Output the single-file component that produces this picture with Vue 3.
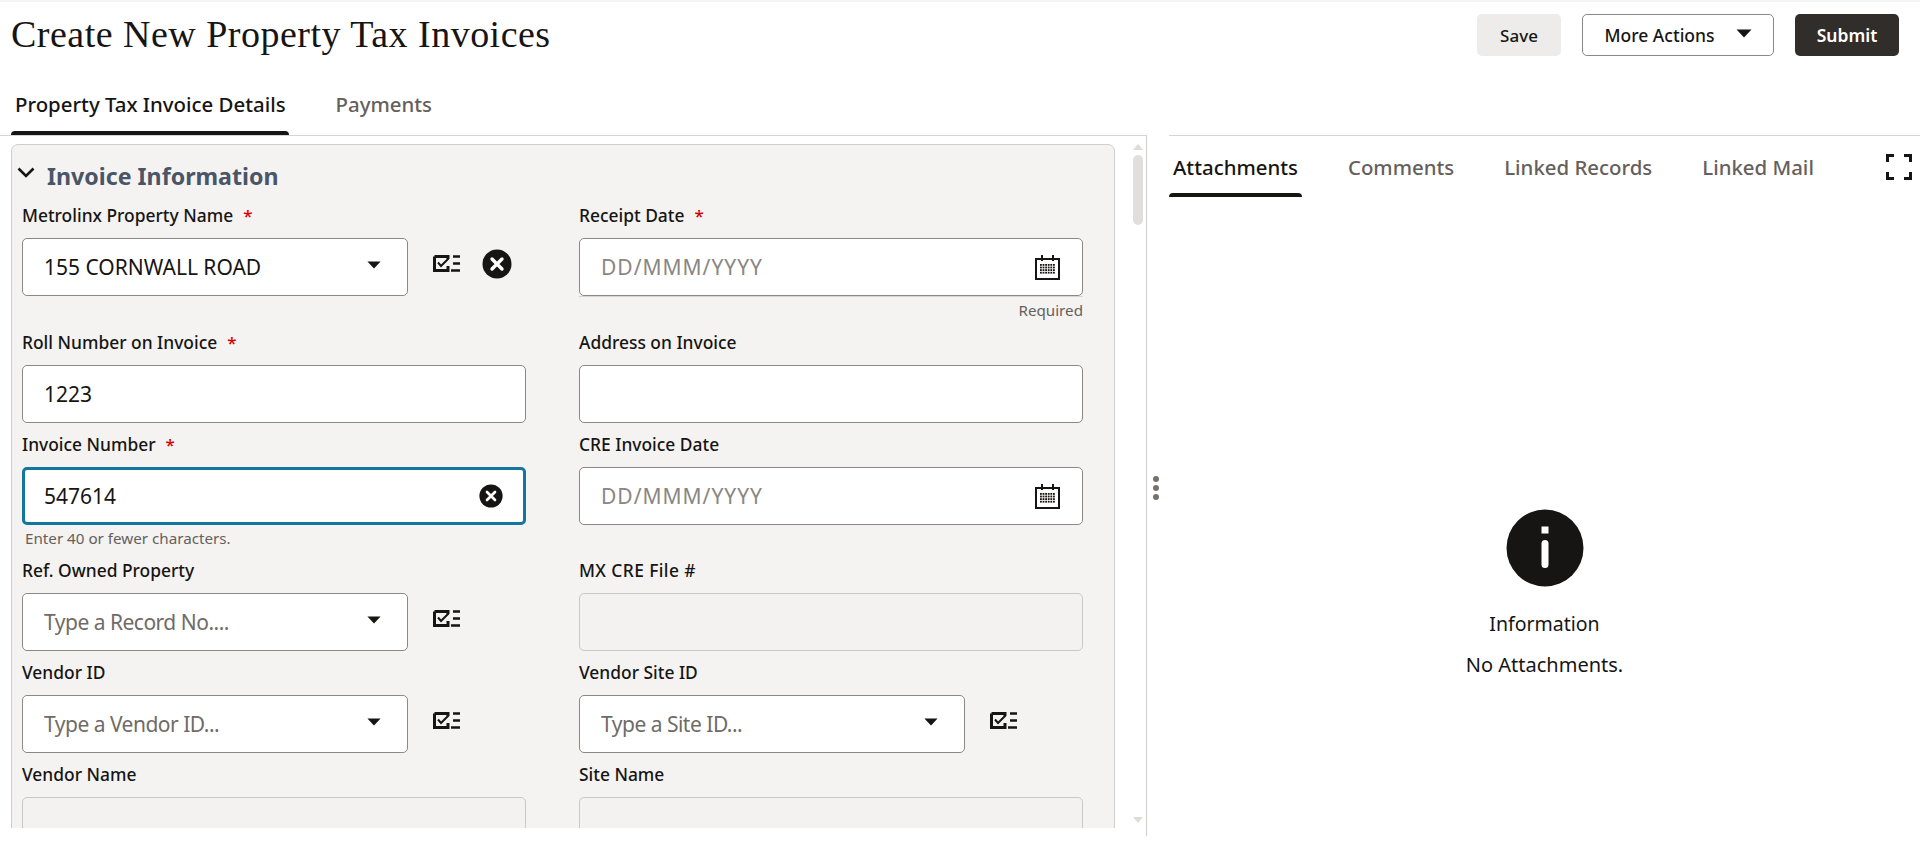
<script setup>
const rightTabs = ['Comments', 'Linked Records', 'Linked Mail']
const calendarDots = []
for (let r = 0; r < 4; r++) for (let c = 0; c < 6; c++) calendarDots.push({ x: 5 + c * 2.6, y: 9 + r * 2.6 })
</script>

<template>
  <div class="page">
    <svg class="defs" width="0" height="0" aria-hidden="true">
      <symbol id="checklist" viewBox="0 0 27 17">
        <path d="M1.5 1.5H15V4M15 11V15.5H1.5V1.5" fill="none" stroke="#161513" stroke-width="3"/>
        <path d="M5 7.5 L8 11 L15.5 3.5" fill="none" stroke="#161513" stroke-width="2"/>
        <path d="M20 1.5H27M20 8.5H27M18 15.5H27" fill="none" stroke="#161513" stroke-width="2.6"/>
      </symbol>
      <symbol id="clear" viewBox="0 0 30 30">
        <circle cx="15" cy="15" r="14.5" fill="#161513"/>
        <path d="M10 10 L20 20 M20 10 L10 20" stroke="#fff" stroke-width="3.4" stroke-linecap="round"/>
      </symbol>
      <symbol id="calendar" viewBox="0 0 25 25">
        <path d="M1 4H24V24H1Z" fill="none" stroke="#161513" stroke-width="2"/>
        <path d="M7 0V6M18 0V6" stroke="#161513" stroke-width="2"/>
        <rect v-for="(d, i) in calendarDots" :key="i" :x="d.x" :y="d.y" width="1.8" height="1.8" fill="#161513"/>
      </symbol>
      <symbol id="caret" viewBox="0 0 16 9">
        <path d="M0.5 0.5H15.5L8 8.5Z" fill="#161513"/>
      </symbol>
    </svg>

    <div class="strip"></div>

    <header class="header">
      <h1 class="title">Create New Property Tax Invoices</h1>
      <div class="actions">
        <button class="btn btn-save">Save</button>
        <button class="btn btn-more">More Actions<svg class="more-caret"><use href="#caret"/></svg></button>
        <button class="btn btn-submit">Submit</button>
      </div>
    </header>

    <nav class="main-tabs">
      <span class="tab active">Property Tax Invoice Details</span>
      <span class="tab">Payments</span>
    </nav>

    <div class="body">
      <section class="left">
        <div class="panel-wrap">
          <div class="panel">
            <div class="section-head">
              <svg class="chevron" viewBox="0 0 18 11"><path d="M1.5 1.5 L9 9 L16.5 1.5" fill="none" stroke="#161513" stroke-width="2.6"/></svg>
              <h2>Invoice Information</h2>
            </div>
            <div class="form">
              <div class="field">
                <label>Metrolinx Property Name<i>*</i></label>
                <div class="line">
                  <div class="ctl select"><span class="val">155 CORNWALL ROAD</span><svg class="caret"><use href="#caret"/></svg></div>
                  <svg class="ico-list"><use href="#checklist"/></svg>
                  <svg class="ico-clear"><use href="#clear"/></svg>
                </div>
              </div>
              <div class="field">
                <label>Receipt Date<i>*</i></label>
                <div class="ctl"><span class="ph date">DD/MMM/YYYY</span><svg class="cal"><use href="#calendar"/></svg></div>
                <div class="help right">Required</div>
              </div>

              <div class="field">
                <label>Roll Number on Invoice<i>*</i></label>
                <div class="ctl"><span class="val">1223</span></div>
              </div>
              <div class="field">
                <label>Address on Invoice</label>
                <div class="ctl"></div>
              </div>

              <div class="field">
                <label>Invoice Number<i>*</i></label>
                <div class="ctl focus"><span class="val">547614</span><svg class="ico-clear-in"><use href="#clear"/></svg></div>
                <div class="help">Enter 40 or fewer characters.</div>
              </div>
              <div class="field">
                <label>CRE Invoice Date</label>
                <div class="ctl"><span class="ph date">DD/MMM/YYYY</span><svg class="cal"><use href="#calendar"/></svg></div>
              </div>

              <div class="field">
                <label>Ref. Owned Property</label>
                <div class="line">
                  <div class="ctl select"><span class="ph">Type a Record No....</span><svg class="caret"><use href="#caret"/></svg></div>
                  <svg class="ico-list"><use href="#checklist"/></svg>
                </div>
              </div>
              <div class="field">
                <label class="wide">MX CRE File #</label>
                <div class="ctl off"></div>
              </div>

              <div class="field">
                <label>Vendor ID</label>
                <div class="line">
                  <div class="ctl select"><span class="ph">Type a Vendor ID...</span><svg class="caret"><use href="#caret"/></svg></div>
                  <svg class="ico-list"><use href="#checklist"/></svg>
                </div>
              </div>
              <div class="field">
                <label>Vendor Site ID</label>
                <div class="line">
                  <div class="ctl select"><span class="ph">Type a Site ID...</span><svg class="caret"><use href="#caret"/></svg></div>
                  <svg class="ico-list"><use href="#checklist"/></svg>
                </div>
              </div>

              <div class="field">
                <label>Vendor Name</label>
                <div class="ctl off"></div>
              </div>
              <div class="field">
                <label>Site Name</label>
                <div class="ctl off"></div>
              </div>
            </div>
          </div>
        </div>
        <div class="scrollbar">
          <span class="arrow up"></span>
          <span class="thumb"></span>
          <span class="arrow down"></span>
        </div>
      </section>

      <div class="splitter"><span></span><span></span><span></span></div>

      <section class="right">
        <nav class="side-tabs">
          <span class="stab active">Attachments</span>
          <span v-for="t in rightTabs" :key="t" class="stab">{{ t }}</span>
          <svg class="expand" viewBox="0 0 26 26">
            <path d="M1.5 8V1.5H8M18 1.5H24.5V8M24.5 18V24.5H18M8 24.5H1.5V18" fill="none" stroke="#161513" stroke-width="3"/>
          </svg>
        </nav>
        <div class="empty">
          <svg class="info" viewBox="0 0 78 78">
            <circle cx="39" cy="39" r="38.5" fill="#161513"/>
            <rect x="35.5" y="17.5" width="7" height="7" fill="#fff"/>
            <rect x="35.5" y="31" width="7" height="28" rx="3.5" fill="#fff"/>
          </svg>
          <p class="info-title">Information</p>
          <p class="info-text">No Attachments.</p>
        </div>
      </section>
    </div>
  </div>
</template>

<style>
html, body { margin: 0; background: #fff; overflow: hidden; }
</style>

<style scoped>
.page {
  height: 843px;
  width: 1920px;
  overflow: hidden;
  background: #fff;
  color: #161513;
  font-family: "Noto Sans", "Open Sans", sans-serif;
  display: flex;
  flex-direction: column;
}
.defs { position: absolute; }
.strip { height: 2px; background: #f5f5f5; flex: none; }
.header {
  flex: none;
  height: 70px;
  display: flex;
  justify-content: space-between;
  padding: 12px 21px 0 11px;
  box-sizing: border-box;
}
.title {
  margin: -1px 0 0;
  font-family: "Liberation Serif", "DejaVu Serif", serif;
  font-weight: 400;
  font-size: 38px;
  letter-spacing: 0.48px;
  line-height: 42px;
  color: #161513;
}
.actions { display: flex; gap: 21px; height: 42px; }
.btn {
  font-family: inherit;
  font-size: 17.5px;
  font-weight: 500;
  height: 42px;
  padding: 0;
  border-radius: 5px;
  border: 1px solid transparent;
  color: #161513;
  display: flex;
  align-items: center;
  justify-content: center;
  box-sizing: border-box;
}
.btn-save { width: 84px; background: #edecea; font-size: 17px; }
.btn-more { width: 192px; background: #fff; border-color: #8b8986; gap: 21px; }
.more-caret { width: 16px; height: 9px; margin-top: -3px; }
.btn-submit { width: 104px; background: #312d2a; color: #fff; font-weight: 600; }

.main-tabs {
  flex: none;
  height: 63px;
  box-sizing: border-box;
  display: flex;
  gap: 43px;
  padding-left: 11px;
  align-items: flex-end;
}
.tab {
  height: 63px;
  box-sizing: border-box;
  padding: 18px 3px 0 4px;
  font-size: 20.4px;
  font-weight: 500;
  color: #65605c;
  line-height: 28px;
  position: relative;
}
.tab.active { color: #161513; }
.tab.active::after,
.stab.active::after {
  content: "";
  position: absolute;
  left: 0;
  right: 0;
  bottom: 0;
  height: 4px;
  background: #161513;
  border-radius: 4px 4px 0 0;
}

.body { flex: none; height: 701px; display: flex; }
.left {
  width: 1147px;
  flex: none;
  display: flex;
  border-top: 1px solid #d6d5d3;
  border-right: 1px solid #cfcecc;
  box-sizing: border-box;
}
.panel-wrap {
  width: 1115px;
  flex: none;
  height: 692px;
  padding: 8px 0 0 11px;
  box-sizing: border-box;
  overflow: hidden;
}
.panel {
  width: 1104px;
  height: 760px;
  box-sizing: border-box;
  background: #f4f3f1;
  border: 1px solid #cfcecc;
  border-radius: 7px 7px 0 0;
  padding: 0 10px;
}
.section-head { display: flex; align-items: center; height: 60px; gap: 12px; padding: 0 0 0 2px; margin-left: -8px; }
.chevron { width: 18px; height: 11px; margin-top: -6px; margin-left: 1px; flex: none; }
.section-head h2 { margin: 1px 0 0; font-size: 23.2px; font-weight: 700; color: #4a5567; line-height: 30px; }
.form {
  display: grid;
  grid-template-columns: 504px 504px;
  column-gap: 53px;
  row-gap: 11px;
  align-items: start;
}
.field label {
  display: block;
  height: 33px;
  font-size: 17.4px;
  line-height: 20px;
  font-weight: 500;
  color: #161513;
}
.field label.wide { letter-spacing: 0.4px; }
.field label i { font-style: normal; color: #d40000; margin-left: 10px; font-size: 17px; }
.line { display: flex; align-items: flex-start; }
.ctl {
  height: 58px;
  box-sizing: border-box;
  border: 1px solid #8b8986;
  border-radius: 5px;
  background: #fff;
  display: flex;
  align-items: center;
  padding: 0 21px;
  font-size: 21px;
}
.ctl.select { width: 386px; flex: none; }
.ctl.off { background: #f3f2f0; border-color: #c9c8c6; }
.ctl.focus { border: 3px solid #14759e; padding: 0 20px 0 19px; }
.val { color: #161513; }
.ph { color: #6f6b67; letter-spacing: -0.5px; }
.ph.date { color: #8a8683; letter-spacing: 1px; }
.caret { width: 14px; height: 8px; margin-left: auto; margin-right: 5px; margin-top: -4px; }
.cal { width: 25px; height: 25px; margin-left: auto; margin-right: 1px; }
.ico-list { width: 27px; height: 17px; margin: 17px 0 0 25px; flex: none; }
.ico-clear { width: 30px; height: 30px; margin: 11px 0 0 22px; flex: none; }
.ico-clear-in { width: 24px; height: 24px; margin-left: auto; }
.help { height: 24px; font-size: 15.2px; line-height: 27px; color: #65605c; padding-left: 3px; }
.help.right { text-align: right; }

.scrollbar {
  flex: 1;
  height: 692px;
  display: flex;
  flex-direction: column;
  align-items: center;
  padding-top: 8px;
  box-sizing: border-box;
}
.thumb { width: 10px; height: 70px; margin-top: 5px; margin-left: 14px; border-radius: 5px; background: #e0dfdd; }
.arrow { width: 0; height: 0; margin-left: 14px; border-left: 5px solid transparent; border-right: 5px solid transparent; }
.arrow.up { border-bottom: 6px solid #dddcda; }
.arrow.down { border-top: 6px solid #dddcda; margin-top: auto; margin-bottom: 5px; }

.splitter {
  width: 22px;
  flex: none;
  height: 701px;
  display: flex;
  flex-direction: column;
  align-items: center;
  justify-content: center;
  gap: 3px;
  padding-top: 4px;
  box-sizing: border-box;
  padding-right: 4px;
}
.splitter span { width: 6px; height: 6px; border-radius: 50%; background: #75716d; }

.right { flex: 1; border-top: 1px solid #d6d5d3; display: flex; flex-direction: column; }
.side-tabs { height: 61px; display: flex; gap: 50px; position: relative; flex: none; }
.stab { height: 61px; box-sizing: border-box; padding: 17px 0 0; font-size: 20.4px; line-height: 28px; font-weight: 500; color: #65605c; position: relative; }
.stab.active { color: #161513; padding: 17px 4px 0; margin-right: -4px; }
.expand { width: 26px; height: 26px; position: absolute; right: 8px; top: 18px; }
.empty { display: flex; flex-direction: column; align-items: center; padding-top: 312px; }
.info { width: 78px; height: 78px; }
.info-title { margin: 23px 0 0; font-size: 19.5px; line-height: 28px; font-weight: 400; }
.info-text { margin: 13px 0 0; font-size: 20px; line-height: 28px; font-weight: 400; }
</style>
